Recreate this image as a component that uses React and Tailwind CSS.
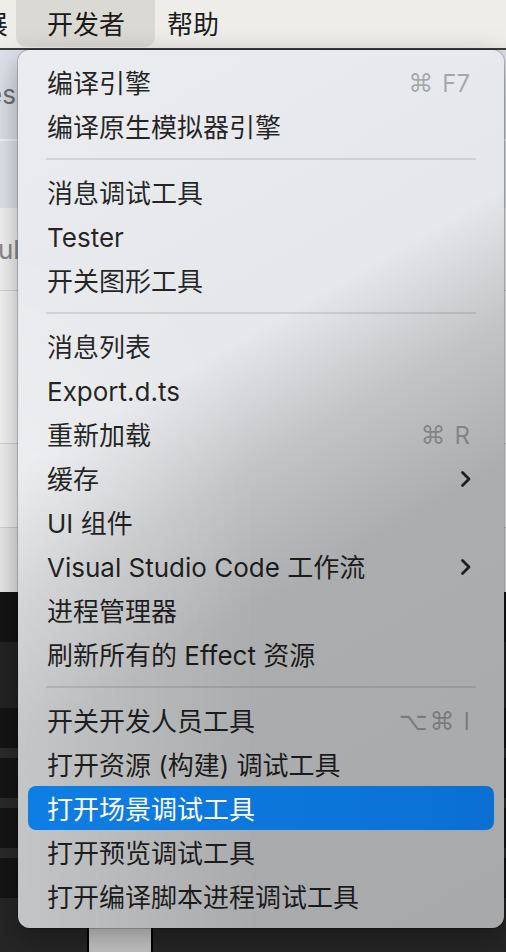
import React from 'react';

const FONT = "font-['Inter','Noto_Sans_CJK_SC','DejaVu_Sans',sans-serif]";

const items = [
  { t: '编译引擎', k: ['⌘', 'F7'] },
  { t: '编译原生模拟器引擎' },
  'sep',
  { t: '消息调试工具' },
  { t: 'Tester' },
  { t: '开关图形工具' },
  'sep',
  { t: '消息列表' },
  { t: 'Export.d.ts' },
  { t: '重新加载', k: ['⌘', 'R'] },
  { t: '缓存', sub: true },
  { t: 'UI 组件' },
  { t: 'Visual Studio Code 工作流', sub: true },
  { t: '进程管理器' },
  { t: '刷新所有的 Effect 资源' },
  'sep',
  { t: '开关开发人员工具', k: ['⌥⌘', 'I'] },
  { t: '打开资源 (构建) 调试工具' },
  { t: '打开场景调试工具', active: true },
  { t: '打开预览调试工具' },
  { t: '打开编译脚本进程调试工具' },
];

function Chevron() {
  return (
    <svg width="12" height="18" viewBox="0 0 12 18" className="mr-[-2px] mt-[2px]">
      <path d="M2.5 2.5 L9 9 L2.5 15.5" fill="none" stroke="#1f1f1f" strokeWidth="2.8" strokeLinecap="round" strokeLinejoin="round" />
    </svg>
  );
}

function Item({ it }) {
  return (
    <div
      className={
        'h-[44px] flex items-center pl-[19px] pr-[24px] rounded-[8px] ' +
        (it.active ? 'bg-[linear-gradient(90deg,#0f7ee4,#0a70d3)] text-white' : 'text-black/85')
      }
    >
      <span className="text-[26px] leading-none whitespace-pre pt-[3px]">{it.t}</span>
      <div className="flex-1" />
      {it.k && (
        <span className="flex items-center gap-[7px] leading-none text-black/30 pt-[3px]">
          <span className="text-[25px] font-['DejaVu_Sans',sans-serif] tracking-[2px]">{it.k[0]}</span>
          <span className="text-[24px] font-['Inter',sans-serif]">{it.k[1]}</span>
        </span>
      )}
      {it.sub && <Chevron />}
    </div>
  );
}

export default function App() {
  return (
    <div className={'w-[506px] h-[952px] overflow-hidden relative bg-[#1c1c1c] ' + FONT}>
      {/* menu bar */}
      <div className="h-[48px] bg-[#efede9] flex items-stretch text-[26px] leading-none text-black/90 overflow-hidden">
        <div className="-ml-[44px] w-[52px] flex items-center whitespace-nowrap pt-[2px]">扩展</div>
        <div className="ml-[8px] w-[139px] h-[47px] rounded-b-[10px] bg-[#dbd9d4] flex items-center pl-[31px] pt-[2px]">开发者</div>
        <div className="ml-[12px] flex items-center pt-[2px]">帮助</div>
      </div>
      <div className="h-[2px] bg-[#3c3c3c]" />

      {/* background window content */}
      <div className="flex flex-col">
        <div className="h-[89px] bg-[#dde1e9] flex items-center text-[26px] text-[#707070]">
          <span className="-ml-[13px]">es</span>
        </div>
        <div className="h-[2px] bg-[#f4f5f7]" />
        <div className="h-[67px] bg-[#e0e4eb]" />
        <div className="h-[82px] bg-[#f3f3f3] flex items-center text-[26px] text-[#8a8a8a]">
          <span className="-ml-[2px]">ul</span>
        </div>
        <div className="h-[1px] bg-[#d5d5d5]" />
        <div className="h-[152px] bg-[#f5f5f5]" />
        <div className="h-[1px] bg-[#d2d2d2]" />
        <div className="h-[83px] bg-[#f1f1f1]" />
        <div className="h-[1px] bg-[#cfcfcf]" />
        <div className="h-[64px] bg-[#e7e7e7]" />
        <div className="h-[50px] bg-[#141414]" />
        <div className="h-[66px] bg-[#232323]" />
        <div className="h-[40px] bg-[#141414]" />
        <div className="h-[10px] bg-[#2b2b2b]" />
        <div className="h-[40px] bg-[#151515]" />
        <div className="h-[10px] bg-[#2b2b2b]" />
        <div className="h-[40px] bg-[#151515]" />
        <div className="h-[10px] bg-[#2b2b2b]" />
        <div className="h-[40px] bg-[#151515]" />
        <div className="h-[54px] bg-[#262626] flex">
          <div className="ml-[87px] w-[66px] h-full border-x-2 border-black bg-[linear-gradient(#dcdcdc,#c4c4c4)]" />
        </div>
      </div>

      {/* dropdown menu */}
      <div className="absolute left-[18px] top-[50px] w-[486px] rounded-[12px] overflow-hidden shadow-[0_0_0_1px_rgba(0,0,0,0.18),0_10px_30px_rgba(0,0,0,0.35)] bg-[linear-gradient(150deg,#eaecef_0%,#e5e7ea_36%,#c2c3c5_48%,#acadaf_60%,#a8a9ab_100%)]">
        <div className="absolute inset-0 bg-[linear-gradient(90deg,rgba(255,255,255,0.3),rgba(255,255,255,0)_50%)] [mask-image:linear-gradient(to_bottom,transparent_20%,black_50%)]" />
        <div className="relative px-[10px] py-[10px]">
          {items.map((it, i) =>
            it === 'sep' ? (
              <div key={i} className="h-[22px] flex items-center px-[18px]">
                <div className="h-[2px] w-full bg-black/10" />
              </div>
            ) : (
              <Item key={i} it={it} />
            )
          )}
        </div>
      </div>
    </div>
  );
}
